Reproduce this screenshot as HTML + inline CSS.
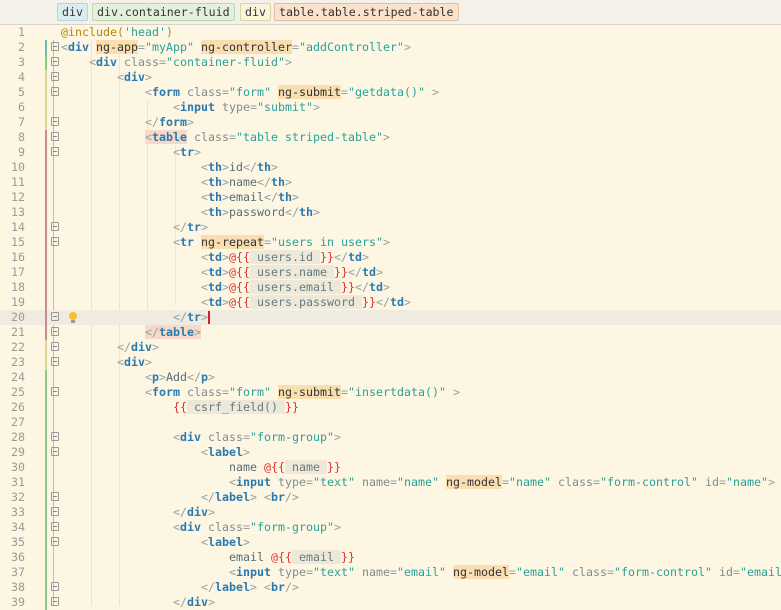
<!DOCTYPE html>
<html><head><style>
body{margin:0;width:781px;height:606px;overflow:hidden;background:#fdf6e3;font-family:"DejaVu Sans Mono","Liberation Mono",monospace;}
#hdr{position:absolute;left:0;top:0;width:781px;height:24px;background:#f4f1ea;border-bottom:1px solid #d8d4c8;}
.crumb{position:absolute;top:3px;height:18px;line-height:16px;font-size:11.6px;padding:0 4px;border:1px solid #c8c8c8;border-radius:2px;color:#333;box-sizing:border-box;white-space:nowrap;}
#code{position:absolute;left:0;top:25px;width:781px;}
.l{position:relative;height:15px;line-height:15px;font-size:11.63px;white-space:pre;}
.n{position:absolute;left:0;width:25px;text-align:right;color:#9a9a9a;}
.t{position:absolute;left:61px;color:#586e75;}
.b{color:#93a1a1}.g{color:#2a7ab0;font-weight:bold}.a{color:#808c8c}.v{color:#2aa198}.ng{color:#333;background:#f9deb0}.r{color:#dc322f}.e{background:#eee8d8;color:#657b83}.d{color:#586e75}.s{color:#2aa198}.inc{color:#b58900}
.cb{position:absolute;left:45px;width:2px;height:15px}
.fold{position:absolute;left:51px;top:2px;width:8px;height:9px;border:1px solid #999;box-sizing:border-box;border-radius:1px;}
.fold:after{content:"";position:absolute;left:1px;top:3px;width:4px;height:1px;background:#888}
.guide{position:absolute;top:40px;width:1px;background:#ece4cc}
.cur{background:#efebe0}
</style></head><body>
<div id="hdr">
<div class="crumb" style="left:57px;background:#dcedf1;border-color:#b5d4df">div</div>
<div class="crumb" style="left:92px;background:#e3f0dc;border-color:#bdd8b0">div.container-fluid</div>
<div class="crumb" style="left:240px;background:#fbf5dc;border-color:#ddd3a8">div</div>
<div class="crumb" style="left:274px;background:#fbe2cc;border-color:#e3bfa0">table.table.striped-table</div>
</div>
<div class="guide" style="left:53px;top:40px;height:566px;background:#bbb"></div>
<div class="guide" style="left:91px;height:566px"></div>
<div class="guide" style="left:119px;height:566px"></div>
<div class="guide" style="left:147px;top:100px;height:240px"></div>
<div class="guide" style="left:175px;top:145px;height:160px"></div>
<div id="code">
<div class="l"><span class="n">1</span><span class="t"><span class="inc">@include(</span><span class="s">'head'</span><span class="inc">)</span></span></div>
<div class="l"><span class="n">2</span><span class="cb" style="background:#6fb8b0"></span><span class="fold"></span><span class="t"><span class="b">&lt;</span><span class="g">div</span> <span class="ng">ng-app</span><span class="b">=</span><span class="v">"myApp"</span> <span class="ng">ng-controller</span><span class="b">=</span><span class="v">"addController"</span><span class="b">&gt;</span></span></div>
<div class="l"><span class="n">3</span><span class="cb" style="background:#8cc88c"></span><span class="fold"></span><span class="t">    <span class="b">&lt;</span><span class="g">div</span> <span class="a">class</span><span class="b">=</span><span class="v">"container-fluid"</span><span class="b">&gt;</span></span></div>
<div class="l"><span class="n">4</span><span class="cb" style="background:#dcd890"></span><span class="fold"></span><span class="t">        <span class="b">&lt;</span><span class="g">div</span><span class="b">&gt;</span></span></div>
<div class="l"><span class="n">5</span><span class="cb" style="background:#dcd890"></span><span class="fold"></span><span class="t">            <span class="b">&lt;</span><span class="g">form</span> <span class="a">class</span><span class="b">=</span><span class="v">"form"</span> <span class="ng">ng-submit</span><span class="b">=</span><span class="v">"getdata()"</span> <span class="b">&gt;</span></span></div>
<div class="l"><span class="n">6</span><span class="cb" style="background:#dcd890"></span><span class="t">                <span class="b">&lt;</span><span class="g">input</span> <span class="a">type</span><span class="b">=</span><span class="v">"submit"</span><span class="b">&gt;</span></span></div>
<div class="l"><span class="n">7</span><span class="cb" style="background:#dcd890"></span><span class="fold"></span><span class="t">            <span class="b">&lt;/</span><span class="g">form</span><span class="b">&gt;</span></span></div>
<div class="l"><span class="n">8</span><span class="cb" style="background:#c98b8b"></span><span class="fold"></span><span class="t">            <span style="background:#f8d8c8"><span class="b">&lt;</span><span class="g">table</span></span> <span class="a">class</span><span class="b">=</span><span class="v">"table striped-table"</span><span class="b">&gt;</span></span></div>
<div class="l"><span class="n">9</span><span class="cb" style="background:#c98b8b"></span><span class="fold"></span><span class="t">                <span class="b">&lt;</span><span class="g">tr</span><span class="b">&gt;</span></span></div>
<div class="l"><span class="n">10</span><span class="cb" style="background:#c98b8b"></span><span class="t">                    <span class="b">&lt;</span><span class="g">th</span><span class="b">&gt;</span><span class="d">id</span><span class="b">&lt;/</span><span class="g">th</span><span class="b">&gt;</span></span></div>
<div class="l"><span class="n">11</span><span class="cb" style="background:#c98b8b"></span><span class="t">                    <span class="b">&lt;</span><span class="g">th</span><span class="b">&gt;</span><span class="d">name</span><span class="b">&lt;/</span><span class="g">th</span><span class="b">&gt;</span></span></div>
<div class="l"><span class="n">12</span><span class="cb" style="background:#c98b8b"></span><span class="t">                    <span class="b">&lt;</span><span class="g">th</span><span class="b">&gt;</span><span class="d">email</span><span class="b">&lt;/</span><span class="g">th</span><span class="b">&gt;</span></span></div>
<div class="l"><span class="n">13</span><span class="cb" style="background:#c98b8b"></span><span class="t">                    <span class="b">&lt;</span><span class="g">th</span><span class="b">&gt;</span><span class="d">password</span><span class="b">&lt;/</span><span class="g">th</span><span class="b">&gt;</span></span></div>
<div class="l"><span class="n">14</span><span class="cb" style="background:#c98b8b"></span><span class="fold"></span><span class="t">                <span class="b">&lt;/</span><span class="g">tr</span><span class="b">&gt;</span></span></div>
<div class="l"><span class="n">15</span><span class="cb" style="background:#c98b8b"></span><span class="fold"></span><span class="t">                <span class="b">&lt;</span><span class="g">tr</span> <span class="ng">ng-repeat</span><span class="b">=</span><span class="v">"users in users"</span><span class="b">&gt;</span></span></div>
<div class="l"><span class="n">16</span><span class="cb" style="background:#c98b8b"></span><span class="t">                    <span class="b">&lt;</span><span class="g">td</span><span class="b">&gt;</span><span class="r">@{{</span><span class="e"> users.id </span><span class="r">}}</span><span class="b">&lt;/</span><span class="g">td</span><span class="b">&gt;</span></span></div>
<div class="l"><span class="n">17</span><span class="cb" style="background:#c98b8b"></span><span class="t">                    <span class="b">&lt;</span><span class="g">td</span><span class="b">&gt;</span><span class="r">@{{</span><span class="e"> users.name </span><span class="r">}}</span><span class="b">&lt;/</span><span class="g">td</span><span class="b">&gt;</span></span></div>
<div class="l"><span class="n">18</span><span class="cb" style="background:#c98b8b"></span><span class="t">                    <span class="b">&lt;</span><span class="g">td</span><span class="b">&gt;</span><span class="r">@{{</span><span class="e"> users.email </span><span class="r">}}</span><span class="b">&lt;/</span><span class="g">td</span><span class="b">&gt;</span></span></div>
<div class="l"><span class="n">19</span><span class="cb" style="background:#c98b8b"></span><span class="t">                    <span class="b">&lt;</span><span class="g">td</span><span class="b">&gt;</span><span class="r">@{{</span><span class="e"> users.password </span><span class="r">}}</span><span class="b">&lt;/</span><span class="g">td</span><span class="b">&gt;</span></span></div>
<div class="l cur"><span class="n">20</span><span class="cb" style="background:#c98b8b"></span><span class="fold"></span><span style="position:absolute;left:69px;top:2px;width:8px;height:8px;border-radius:50%;background:#f3c030"></span><span style="position:absolute;left:71px;top:10px;width:4px;height:3px;background:#999"></span><span class="t">                <span class="b">&lt;/</span><span class="g">tr</span><span class="b">&gt;</span><span style="display:inline-block;width:2px;height:13px;background:#d02020;vertical-align:middle"></span></span></div>
<div class="l"><span class="n">21</span><span class="cb" style="background:#c98b8b"></span><span class="fold"></span><span class="t">            <span style="background:#f8d8c8"><span class="b">&lt;/</span><span class="g">table</span><span class="b">&gt;</span></span></span></div>
<div class="l"><span class="n">22</span><span class="cb" style="background:#dcd890"></span><span class="fold"></span><span class="t">        <span class="b">&lt;/</span><span class="g">div</span><span class="b">&gt;</span></span></div>
<div class="l"><span class="n">23</span><span class="cb" style="background:#dcd890"></span><span class="fold"></span><span class="t">        <span class="b">&lt;</span><span class="g">div</span><span class="b">&gt;</span></span></div>
<div class="l"><span class="n">24</span><span class="cb" style="background:#8cc88c"></span><span class="t">            <span class="b">&lt;</span><span class="g">p</span><span class="b">&gt;</span><span class="d">Add</span><span class="b">&lt;/</span><span class="g">p</span><span class="b">&gt;</span></span></div>
<div class="l"><span class="n">25</span><span class="cb" style="background:#8cc88c"></span><span class="fold"></span><span class="t">            <span class="b">&lt;</span><span class="g">form</span> <span class="a">class</span><span class="b">=</span><span class="v">"form"</span> <span class="ng">ng-submit</span><span class="b">=</span><span class="v">"insertdata()"</span> <span class="b">&gt;</span></span></div>
<div class="l"><span class="n">26</span><span class="cb" style="background:#8cc88c"></span><span class="t">                <span class="r">{{</span><span class="e"> csrf_field() </span><span class="r">}}</span></span></div>
<div class="l"><span class="n">27</span><span class="cb" style="background:#8cc88c"></span><span class="t"></span></div>
<div class="l"><span class="n">28</span><span class="cb" style="background:#8cc88c"></span><span class="fold"></span><span class="t">                <span class="b">&lt;</span><span class="g">div</span> <span class="a">class</span><span class="b">=</span><span class="v">"form-group"</span><span class="b">&gt;</span></span></div>
<div class="l"><span class="n">29</span><span class="cb" style="background:#8cc88c"></span><span class="fold"></span><span class="t">                    <span class="b">&lt;</span><span class="g">label</span><span class="b">&gt;</span></span></div>
<div class="l"><span class="n">30</span><span class="cb" style="background:#8cc88c"></span><span class="t">                        <span class="d">name </span><span class="r">@{{</span><span class="e"> name </span><span class="r">}}</span></span></div>
<div class="l"><span class="n">31</span><span class="cb" style="background:#8cc88c"></span><span class="t">                        <span class="b">&lt;</span><span class="g">input</span> <span class="a">type</span><span class="b">=</span><span class="v">"text"</span> <span class="a">name</span><span class="b">=</span><span class="v">"name"</span> <span class="ng">ng-model</span><span class="b">=</span><span class="v">"name"</span> <span class="a">class</span><span class="b">=</span><span class="v">"form-control"</span> <span class="a">id</span><span class="b">=</span><span class="v">"name"</span><span class="b">&gt;</span></span></div>
<div class="l"><span class="n">32</span><span class="cb" style="background:#8cc88c"></span><span class="fold"></span><span class="t">                    <span class="b">&lt;/</span><span class="g">label</span><span class="b">&gt;</span> <span class="b">&lt;</span><span class="g">br</span><span class="b">/&gt;</span></span></div>
<div class="l"><span class="n">33</span><span class="cb" style="background:#8cc88c"></span><span class="fold"></span><span class="t">                <span class="b">&lt;/</span><span class="g">div</span><span class="b">&gt;</span></span></div>
<div class="l"><span class="n">34</span><span class="cb" style="background:#8cc88c"></span><span class="fold"></span><span class="t">                <span class="b">&lt;</span><span class="g">div</span> <span class="a">class</span><span class="b">=</span><span class="v">"form-group"</span><span class="b">&gt;</span></span></div>
<div class="l"><span class="n">35</span><span class="cb" style="background:#8cc88c"></span><span class="fold"></span><span class="t">                    <span class="b">&lt;</span><span class="g">label</span><span class="b">&gt;</span></span></div>
<div class="l"><span class="n">36</span><span class="cb" style="background:#8cc88c"></span><span class="t">                        <span class="d">email </span><span class="r">@{{</span><span class="e"> email </span><span class="r">}}</span></span></div>
<div class="l"><span class="n">37</span><span class="cb" style="background:#8cc88c"></span><span class="t">                        <span class="b">&lt;</span><span class="g">input</span> <span class="a">type</span><span class="b">=</span><span class="v">"text"</span> <span class="a">name</span><span class="b">=</span><span class="v">"email"</span> <span class="ng">ng-model</span><span class="b">=</span><span class="v">"email"</span> <span class="a">class</span><span class="b">=</span><span class="v">"form-control"</span> <span class="a">id</span><span class="b">=</span><span class="v">"email"</span><span class="b">&gt;</span></span></div>
<div class="l"><span class="n">38</span><span class="cb" style="background:#8cc88c"></span><span class="fold"></span><span class="t">                    <span class="b">&lt;/</span><span class="g">label</span><span class="b">&gt;</span> <span class="b">&lt;</span><span class="g">br</span><span class="b">/&gt;</span></span></div>
<div class="l"><span class="n">39</span><span class="cb" style="background:#8cc88c"></span><span class="fold"></span><span class="t">                <span class="b">&lt;/</span><span class="g">div</span><span class="b">&gt;</span></span></div>
</div>
</body></html>
